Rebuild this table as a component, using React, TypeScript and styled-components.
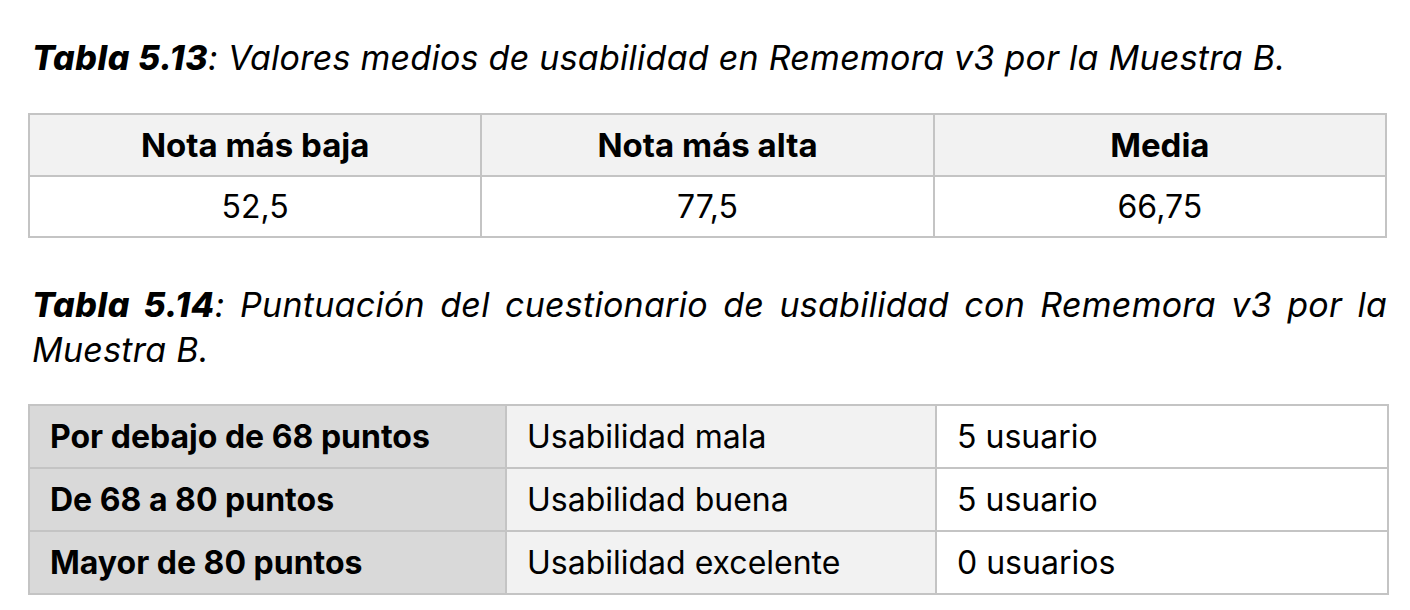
import styled, { createGlobalStyle } from "styled-components";

const GlobalStyle = createGlobalStyle`
  body {
    margin: 0;
    background: #ffffff;
    font-family: Inter, "Liberation Sans", sans-serif;
    color: #000000;
  }
`;

const Page = styled.div`
  width: 1410px;
  padding: 35px 23px 0 28px;
  box-sizing: border-box;
`;

const Caption = styled.p<{ $justify?: boolean }>`
  margin: 0 0 0 4px;
  font-size: 34px;
  line-height: 45px;
  font-style: italic;
  text-align: ${(p) => (p.$justify ? "justify" : "left")};
  letter-spacing: 0.25px;

  b {
    font-weight: 800;
    letter-spacing: 0.6px;
  }
`;

const Table = styled.table<{ $gapTop: number; $gapBottom: number }>`
  width: 1359px;
  border-collapse: collapse;
  table-layout: fixed;
  font-size: 32px;
  margin: ${(p) => `${p.$gapTop}px 0 ${p.$gapBottom}px`};
`;

const HeadCell = styled.th`
  border: 2px solid #c4c4c4;
  background: #f2f2f2;
  height: 60px;
  font-size: 33px;
  font-weight: 700;
  text-align: center;
  padding: 0;
`;

const Cell = styled.td<{ $tone?: "dark" | "light" | "white"; $bold?: boolean }>`
  border: 2px solid #c4c4c4;
  height: ${(p) => (p.$tone ? "61px" : "59px")};
  padding: 0 0 0 ${(p) => (p.$tone ? "20px" : "0")};
  text-align: ${(p) => (p.$tone ? "left" : "center")};
  font-size: 32px;
  font-weight: ${(p) => (p.$bold ? 700 : 400)};
  background: ${(p) =>
    p.$tone === "dark" ? "#d9d9d9" : p.$tone === "light" ? "#f2f2f2" : "#ffffff"};
`;

const scores = [
  { range: "Por debajo de 68 puntos", label: "Usabilidad mala", users: "5 usuario" },
  { range: "De 68 a 80 puntos", label: "Usabilidad buena", users: "5 usuario" },
  { range: "Mayor de 80 puntos", label: "Usabilidad excelente", users: "0 usuarios" },
];

export default function App() {
  return (
    <Page>
      <GlobalStyle />
      <Caption>
        <b>Tabla 5.13</b>: Valores medios de usabilidad en Rememora v3 por la Muestra B.
      </Caption>
      <Table $gapTop={33} $gapBottom={44}>
        <thead>
          <tr>
            <HeadCell>Nota más baja</HeadCell>
            <HeadCell>Nota más alta</HeadCell>
            <HeadCell>Media</HeadCell>
          </tr>
        </thead>
        <tbody>
          <tr>
            <Cell>52,5</Cell>
            <Cell>77,5</Cell>
            <Cell>66,75</Cell>
          </tr>
        </tbody>
      </Table>
      <Caption $justify>
        <b>Tabla 5.14</b>: Puntuación del cuestionario de usabilidad con Rememora v3 por la
        Muestra B.
      </Caption>
      <Table $gapTop={32} $gapBottom={0}>
        <colgroup>
          <col style={{ width: 477 }} />
          <col style={{ width: 430 }} />
          <col style={{ width: 452 }} />
        </colgroup>
        <tbody>
          {scores.map((s) => (
            <tr key={s.range}>
              <Cell $tone="dark" $bold>
                {s.range}
              </Cell>
              <Cell $tone="light">{s.label}</Cell>
              <Cell $tone="white">{s.users}</Cell>
            </tr>
          ))}
        </tbody>
      </Table>
    </Page>
  );
}
